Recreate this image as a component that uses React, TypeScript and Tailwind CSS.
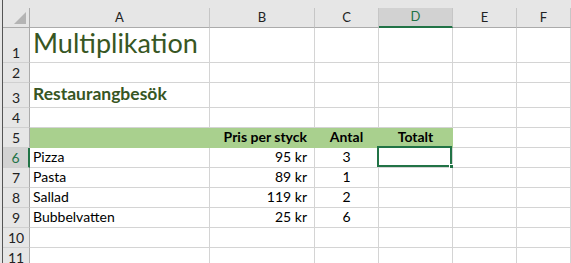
import React from 'react';

type Cell = {
  text?: string;
  align?: 'left' | 'right' | 'center';
  bold?: boolean;
  fill?: boolean;
};

const cols = ['A', 'B', 'C', 'D', 'E', 'F'];

const rowHeights = ['h-[35px]', 'h-[20px]', 'h-[25px]', 'h-[20px]', 'h-[20px]', 'h-[20px]', 'h-[20px]', 'h-[20px]', 'h-[20px]', 'h-[20px]', 'h-[20px]'];

const body: Record<number, Cell[]> = {
  5: [
    { fill: true },
    { text: 'Pris per styck', align: 'right', bold: true, fill: true },
    { text: 'Antal', align: 'center', bold: true, fill: true },
    { text: 'Totalt', align: 'center', bold: true, fill: true },
  ],
  6: [{ text: 'Pizza' }, { text: '95 kr', align: 'right' }, { text: '3', align: 'center' }],
  7: [{ text: 'Pasta' }, { text: '89 kr', align: 'right' }, { text: '1', align: 'center' }],
  8: [{ text: 'Sallad' }, { text: '119 kr', align: 'right' }, { text: '2', align: 'center' }],
  9: [{ text: 'Bubbelvatten' }, { text: '25 kr', align: 'right' }, { text: '6', align: 'center' }],
};

function DataCell({ cell, row, col }: { cell?: Cell; row: number; col: number }) {
  const c = cell ?? {};
  const selected = row === 6 && col === 3;
  const align =
    c.align === 'right' ? 'justify-end pr-[7px]' : c.align === 'center' ? 'justify-center' : 'justify-start pl-[3px]';
  return (
    <div
      className={`relative flex items-end pb-[2px] border-r border-b text-[14px] leading-[17px] text-black whitespace-nowrap ${align} ${
        c.fill ? 'bg-[#a9d08e] border-[#a9d08e]' : 'bg-white border-[#d4d4d4]'
      } ${c.bold ? 'font-bold' : ''}`}
    >
      {c.text}
      {selected && (
        <>
          {/* active cell frame + fill handle */}
          <div className="absolute -left-[2px] -top-[2px] right-0 bottom-0 border-2 border-[#217346]" />
          <div className="absolute -right-[3px] -bottom-[3px] w-[6px] h-[6px] bg-[#217346] border border-white" />
        </>
      )}
    </div>
  );
}

export default function App() {
  return (
    <div className="w-[571px] h-[263px] overflow-hidden bg-white flex font-['Lato',sans-serif]">
      {/* sliver of the window behind */}
      <div className="w-[3px] shrink-0 bg-[#e6e6e6] border-r border-[#555]" />

      <div className="flex-1 flex flex-col min-w-0">
        <div className="h-[8px] shrink-0 bg-[#e6e6e6]" />

        <div className="grid grid-cols-[27px_180px_105px_64px_74px_64px_1fr]">
          {/* Column header row */}
          <div className="h-[20px] relative bg-[#e6e6e6] border-r border-b border-[#ababab]">
            <div className="absolute right-[3px] bottom-[3px] w-0 h-0 border-l-[12px] border-l-transparent border-b-[12px] border-b-[#b4b4b4]" />
          </div>
          {cols.map((c) => (
            <div
              key={c}
              className={`h-[20px] flex items-center justify-center text-[13px] border-r border-[#c6c6c6] ${
                c === 'D'
                  ? 'bg-[#d2d2d2] text-[#217346] border-b-2 border-b-[#217346]'
                  : 'bg-[#e6e6e6] text-[#222] border-b border-b-[#ababab]'
              }`}
            >
              {c}
            </div>
          ))}

          {rowHeights.map((h, i) => {
            const row = i + 1;
            const active = row === 6;
            return (
              <React.Fragment key={row}>
                <div
                  className={`${h} flex items-end justify-center pb-[1px] text-[14px] leading-[17px] border-b border-b-[#d0d0d0] ${
                    active
                      ? 'bg-[#d2d2d2] text-[#217346] border-r-2 border-r-[#217346]'
                      : 'bg-[#e6e6e6] text-[#222] border-r border-r-[#ababab]'
                  }`}
                >
                  {row}
                </div>

                {row === 1 ? (
                  <>
                    <div className={`${h} flex items-end pl-[3px] pb-[3px] border-r border-b border-[#d4d4d4] text-[27px] leading-[32px] text-[#375623] whitespace-nowrap`}>
                      Multiplikation
                    </div>
                    {cols.slice(1).map((c) => (
                      <div key={c} className="border-r border-b border-[#d4d4d4]" />
                    ))}
                  </>
                ) : row === 3 ? (
                  <>
                    <div className={`${h} flex items-end pl-[3px] pb-[3px] border-r border-b border-[#d4d4d4] text-[17.5px] leading-[21px] font-bold text-[#375623] whitespace-nowrap`}>
                      Restaurangbesök
                    </div>
                    {cols.slice(1).map((c) => (
                      <div key={c} className="border-r border-b border-[#d4d4d4]" />
                    ))}
                  </>
                ) : (
                  cols.map((c, ci) => <DataCell key={c} cell={body[row]?.[ci]} row={row} col={ci} />)
                )}
              </React.Fragment>
            );
          })}
        </div>
      </div>
    </div>
  );
}
